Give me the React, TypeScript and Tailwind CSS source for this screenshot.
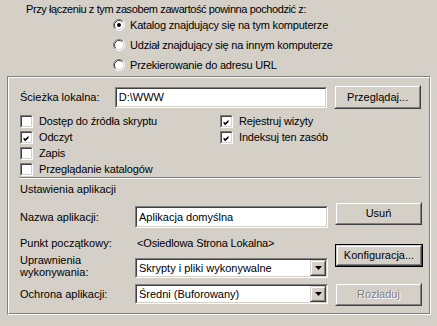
import React from "react";

function Sunken({ className = "", children }: { className?: string; children?: React.ReactNode }) {
  return (
    <div className={"border border-t-[#808080] border-l-[#808080] border-b-white border-r-white " + className}>
      <div className="flex h-full w-full border border-t-[#404040] border-l-[#404040] border-b-[#d4d0c8] border-r-[#d4d0c8] bg-white">
        {children}
      </div>
    </div>
  );
}

function Btn({ label, className = "", isDefault = false, disabled = false }: { label: string; className?: string; isDefault?: boolean; disabled?: boolean }) {
  const face = (
    <div className="flex h-full w-full border border-t-[#d4d0c8] border-l-[#d4d0c8] border-b-[#404040] border-r-[#404040]">
      <div className="flex h-full w-full items-center justify-center border border-t-white border-l-white border-b-[#808080] border-r-[#808080]">
        <span className={disabled ? "text-[#808080] [text-shadow:1px_1px_0_#ffffff]" : ""}>{label}</span>
      </div>
    </div>
  );
  if (isDefault) {
    return <div className={"border border-black " + className}>{face}</div>;
  }
  return <div className={className}>{face}</div>;
}

function Radio({ checked, label }: { checked?: boolean; label: string }) {
  return (
    <div className="flex h-[20px] items-center gap-[5px]">
      <svg width="12" height="12" viewBox="0 0 12 12" className="shrink-0">
        <circle cx="6" cy="6" r="5" fill="#ffffff" />
        <path d="M2.11 9.89 A5.5 5.5 0 0 1 9.89 2.11" fill="none" stroke="#808080" strokeWidth="1" />
        <path d="M9.89 2.11 A5.5 5.5 0 0 1 2.11 9.89" fill="none" stroke="#ffffff" strokeWidth="1" />
        <path d="M2.82 9.18 A4.5 4.5 0 0 1 9.18 2.82" fill="none" stroke="#404040" strokeWidth="1" />
        <path d="M9.18 2.82 A4.5 4.5 0 0 1 2.82 9.18" fill="none" stroke="#d4d0c8" strokeWidth="1" />
        {checked ? <circle cx="6" cy="6" r="2" fill="#000000" /> : null}
      </svg>
      <span className="tracking-[-0.2px]">{label}</span>
    </div>
  );
}

function Check({ checked, label }: { checked?: boolean; label: string }) {
  return (
    <div className="flex h-[16px] items-start gap-[6px]">
      <Sunken className="h-[13px] w-[13px] shrink-0">
        {checked ? (
          <svg width="11" height="11" viewBox="0 0 11 11">
            <polygon points="2,4 4,6 8,2 8,5 4,9 2,7" fill="#000000" />
          </svg>
        ) : null}
      </Sunken>
      <span className="leading-[13px] tracking-[-0.15px]">{label}</span>
    </div>
  );
}

function Select({ value, className = "" }: { value: string; className?: string }) {
  return (
    <Sunken className={className}>
      <span className="flex-1 self-center pl-[2px]">{value}</span>
      <div className="w-[16px] border border-t-[#d4d0c8] border-l-[#d4d0c8] border-b-[#404040] border-r-[#404040] bg-[#d4d0c8]">
        <div className="flex h-full items-center justify-center border border-t-white border-l-white border-b-[#808080] border-r-[#808080]">
          <svg width="7" height="4" viewBox="0 0 7 4">
            <polygon points="0,0 7,0 3.5,4" fill="#000000" />
          </svg>
        </div>
      </div>
    </Sunken>
  );
}

export default function App() {
  return (
    <div className="h-[326px] w-[437px] bg-[#d4d0c8] font-['Liberation_Sans',Arial,sans-serif] text-[11px] leading-[13px] text-black">
      <div className="h-[15px] pl-[26px] pt-[3px] tracking-[-0.4px]">Przy łączeniu z tym zasobem zawartość powinna pochodzić z:</div>
      <div className="flex flex-col pl-[113px]">
        <Radio checked label="Katalog znajdujący się na tym komputerze" />
        <Radio label="Udział znajdujący się na innym komputerze" />
        <Radio label="Przekierowanie do adresu URL" />
      </div>

      <div className="ml-[7px] mt-[1px] h-[239px] w-[424px] border border-t-[#808080] border-l-[#808080] border-b-white border-r-white">
        <div className="h-full w-full border border-t-white border-l-white border-b-[#808080] border-r-[#808080] pl-[11px] pr-[8px]">
          <div className="mt-[7px] flex h-[24px] items-center">
            <span className="w-[95px]">Ścieżka lokalna:</span>
            <Sunken className="h-[21px] w-[213px]">
              <span className="self-center pl-[2px]">D:\WWW</span>
            </Sunken>
            <Btn label="Przeglądaj..." className="ml-[7px] h-[24px] w-[87px]" />
          </div>

          <div className="mt-[6px] grid grid-cols-[200px_1fr]">
            <div className="flex flex-col">
              <Check label="Dostęp do źródła skryptu" />
              <Check checked label="Odczyt" />
              <Check label="Zapis" />
              <Check label="Przeglądanie katalogów" />
            </div>
            <div className="flex flex-col">
              <Check checked label="Rejestruj wizyty" />
              <Check checked label="Indeksuj ten zasób" />
            </div>
          </div>

          <div className="-ml-[1px] mt-[-2px] h-[2px] w-[402px] border-t border-t-[#808080] border-b border-b-white" />

          <div className="mt-[4px]">Ustawienia aplikacji</div>

          <div className="flex">
            <div className="flex w-[308px] flex-col">
              <div className="mt-[10px] flex h-[22px] items-center">
                <span className="w-[115px]">Nazwa aplikacji:</span>
                <Sunken className="h-[22px] w-[193px]">
                  <span className="self-center pl-[2px]">Aplikacja domyślna</span>
                </Sunken>
              </div>
              <div className="mt-[8px] flex h-[14px] items-center">
                <span className="w-[117px]">Punkt początkowy:</span>
                <span className="tracking-[-0.15px]">&lt;Osiedlowa Strona Lokalna&gt;</span>
              </div>
              <div className="mt-[2px] flex h-[26px] items-end">
                <span className="w-[115px] leading-[12px]">
                  Uprawnienia
                  <br />
                  wykonywania:
                </span>
                <Select value="Skrypty i pliki wykonywalne" className="h-[20px] w-[193px]" />
              </div>
              <div className="mt-[6px] flex h-[20px] items-center">
                <span className="w-[115px]">Ochrona aplikacji:</span>
                <Select value="Średni (Buforowany)" className="h-[20px] w-[193px]" />
              </div>
            </div>
            <div className="ml-[7px] flex flex-col">
              <Btn label="Usuń" className="mt-[6px] h-[23px] w-[87px]" />
              <Btn label="Konfiguracja..." isDefault className="mt-[19px] h-[23px] w-[88px]" />
              <Btn label="Rozładuj" disabled className="mt-[16px] h-[23px] w-[87px]" />
            </div>
          </div>
        </div>
      </div>
    </div>
  );
}
